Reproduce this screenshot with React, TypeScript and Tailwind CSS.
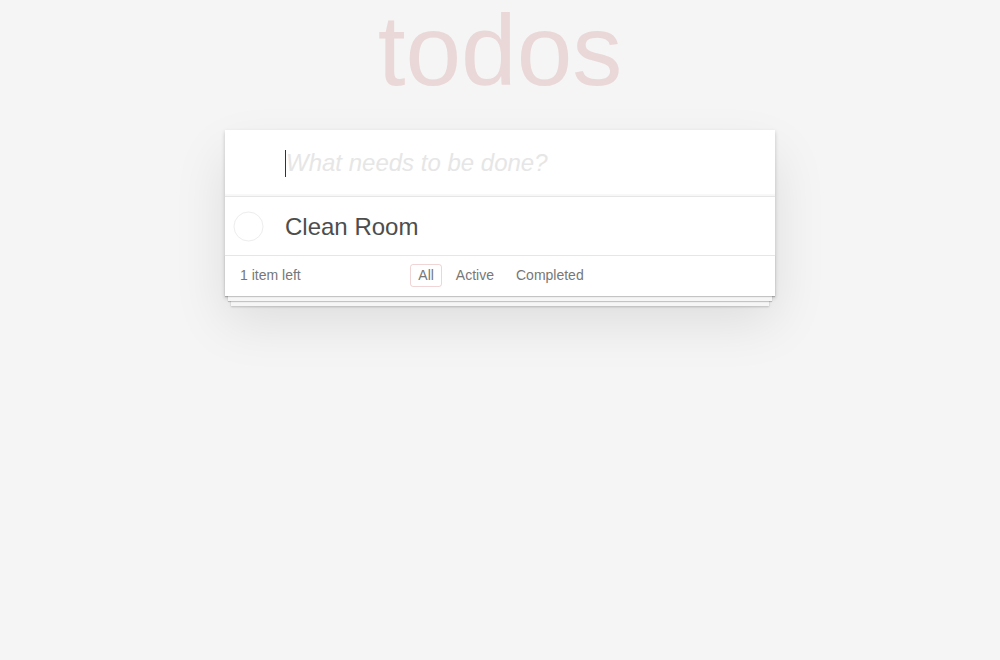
export default function App() {
    const filters = ['All', 'Active', 'Completed']
    return (
        <div className="min-h-screen bg-[#f5f5f5] font-['Liberation_Sans',Arial,sans-serif] text-[14px] text-[#4d4d4d]">
            <section className="mx-auto w-[550px]">
                <h1 className="text-center text-[100px] leading-[100px] font-thin text-[rgba(175,47,47,0.15)]">
                    todos
                </h1>
                <div className="mt-[30px] bg-white shadow-[0_2px_4px_0_rgba(0,0,0,0.2),0_25px_50px_0_rgba(0,0,0,0.1)]">
                    {/* new todo */}
                    <div className="flex h-[66px] items-center pl-[60px] pr-4 shadow-[inset_0_-2px_1px_rgba(0,0,0,0.03)]">
                        <span className="h-[27px] w-px bg-[#333]" />
                        <span className="text-[24px] italic font-light text-[#e6e6e6]">
                            What needs to be done?
                        </span>
                    </div>
                    {/* list */}
                    <ul className="border-t border-[#e6e6e6]">
                        <li className="flex h-[58px] items-center">
                            <div className="flex w-[60px] items-center pl-2">
                                <svg width="31" height="31" viewBox="0 0 31 31">
                                    <circle cx="15.5" cy="15.5" r="14.5" fill="none" stroke="#ededed" strokeWidth="1" />
                                </svg>
                            </div>
                            <label className="text-[24px] leading-[29px] text-[#4d4d4d]">Clean Room</label>
                        </li>
                    </ul>
                    {/* footer */}
                    <footer className="grid h-[41px] grid-cols-[1fr_auto_1fr] items-center border-t border-[#e6e6e6] bg-white px-[15px] pb-px text-[#777] shadow-[0_1px_1px_rgba(0,0,0,0.2),0_8px_0_-3px_#f6f6f6,0_9px_1px_-3px_rgba(0,0,0,0.2),0_16px_0_-6px_#f6f6f6,0_17px_2px_-6px_rgba(0,0,0,0.2)]">
                        <span>
                            <strong className="font-normal">1</strong> item left
                        </span>
                        <ul className="flex gap-[6px] pl-[2px]">
                            {filters.map((f) => (
                                <li key={f}>
                                    <a
                                        className={
                                            f === 'All'
                                                ? 'block rounded-[3px] border border-[rgba(175,47,47,0.2)] px-[7px] py-[2px] leading-[17px]'
                                                : 'block rounded-[3px] border border-transparent px-[7px] py-[2px] leading-[17px]'
                                        }
                                    >
                                        {f}
                                    </a>
                                </li>
                            ))}
                        </ul>
                        <span />
                    </footer>
                </div>
            </section>
        </div>
    )
}
